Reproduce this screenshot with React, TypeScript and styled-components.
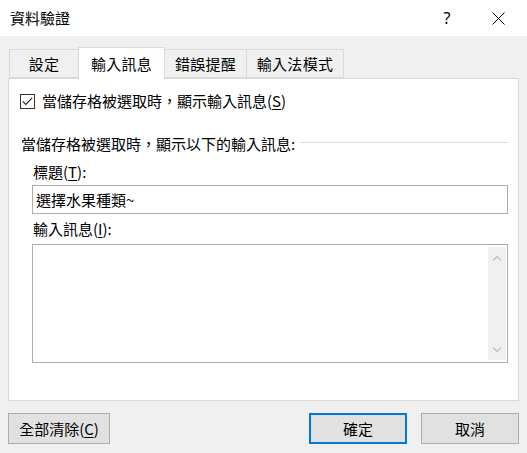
import styled, { createGlobalStyle } from "styled-components";

const GlobalStyle = createGlobalStyle`
    html, body {
        margin: 0;
        padding: 0;
        background: #f0f0f0;
    }

    body {
        font-family: "Noto Sans CJK TC", "Noto Sans", sans-serif;
        font-size: 15px;
        color: #000;
    }
`;

const Dialog = styled.div`
    width: 527px;
    height: 453px;
    background: #f0f0f0;
    display: flex;
    flex-direction: column;
    overflow: hidden;
`;

const TitleBar = styled.div`
    height: 36px;
    background: #fff;
    display: flex;
    align-items: center;
    padding-left: 10px;
    box-sizing: border-box;
`;

const Title = styled.div`
    flex: 1;
    line-height: 20px;
`;

const TitleButton = styled.div<{ $width: number }>`
    width: ${(p) => p.$width}px;
    height: 36px;
    display: flex;
    align-items: center;
    justify-content: center;
    font-family: "Noto Sans", sans-serif;
    font-size: 16px;
`;

const Body = styled.div`
    padding: 11px 8px 0 8px;
    display: flex;
    flex-direction: column;
`;

const TabRow = styled.div`
    display: flex;
    align-items: flex-end;
    padding-left: 1px;
    height: 32px;
    margin-bottom: -1px;
    position: relative;
    z-index: 1;
`;

const Tab = styled.div<{ $width: number; $active?: boolean }>`
    width: ${(p) => p.$width}px;
    height: ${(p) => (p.$active ? 32 : 29)}px;
    margin-bottom: ${(p) => (p.$active ? 0 : 1)}px;
    margin-left: -1px;
    box-sizing: border-box;
    border: 1px solid #d9d9d9;
    border-bottom: ${(p) => (p.$active ? "none" : "1px solid #d9d9d9")};
    background: ${(p) => (p.$active ? "#fff" : "#f0f0f0")};
    display: flex;
    align-items: center;
    justify-content: center;
    padding-top: ${(p) => (p.$active ? 0 : 1)}px;
    line-height: 20px;
    letter-spacing: 0.3px;

    &:first-child {
        margin-left: 0;
    }
`;

const Panel = styled.div`
    height: 323px;
    box-sizing: border-box;
    background: #fff;
    border: 1px solid #d9d9d9;
    padding: 0 10px 0 11px;
    display: flex;
    flex-direction: column;
`;

const CheckRow = styled.div`
    margin-top: 12px;
    height: 20px;
    display: flex;
    align-items: center;
    gap: 7px;
    line-height: 20px;
`;

const CheckBox = styled.div`
    width: 15px;
    height: 15px;
    box-sizing: border-box;
    border: 1px solid #333;
    background: #fff;
    display: flex;
    align-items: center;
    justify-content: center;
`;

const SectionRow = styled.div`
    margin-top: 23px;
    height: 20px;
    display: flex;
    align-items: center;
    padding-left: 1px;
    line-height: 20px;
`;

const SectionLine = styled.div`
    flex: 1;
    height: 1px;
    background: #dcdcdc;
    margin-left: 5px;
    margin-top: -3px;
`;

const Indent = styled.div`
    padding-left: 12px;
    display: flex;
    flex-direction: column;
`;

const FieldLabel = styled.div<{ $top: number }>`
    margin-top: ${(p) => p.$top}px;
    height: 20px;
    line-height: 20px;
    padding-left: 1px;
`;

const TextInput = styled.input`
    margin-top: 3px;
    height: 29px;
    width: 100%;
    box-sizing: border-box;
    border: 1px solid #adadad;
    padding: 0 3px;
    font-family: inherit;
    font-size: 15px;
    color: #000;
    outline: none;
    background: #fff;
`;

const MessageBox = styled.div`
    margin-top: 5px;
    height: 119px;
    box-sizing: border-box;
    border: 1px solid #adadad;
    background: #fff;
    padding: 2px 1px 2px 0;
    display: flex;
    justify-content: flex-end;
`;

const ScrollTrack = styled.div`
    width: 18px;
    background: #f0f0f0;
    display: flex;
    flex-direction: column;
    justify-content: space-between;
    align-items: center;
    padding: 8px 0 7px;
    box-sizing: border-box;
`;

const ButtonRow = styled.div`
    margin-top: 12px;
    display: flex;
    align-items: center;
`;

const Button = styled.div<{ $width: number; $primary?: boolean }>`
    width: ${(p) => p.$width}px;
    height: 31px;
    box-sizing: border-box;
    background: #e1e1e1;
    border: ${(p) => (p.$primary ? "2px solid #0078d7" : "1px solid #adadad")};
    display: flex;
    align-items: center;
    justify-content: center;
    line-height: 20px;
`;

const Spacer = styled.div`
    flex: 1;
`;

const Gap = styled.div`
    width: 14px;
`;

const Key = styled.span`
    text-decoration: underline;
    text-underline-offset: 2px;
`;

const Chevron = ({ up }: { up?: boolean }) => (
    <svg width="10" height="6" viewBox="0 0 10 6">
        <path
            d={up ? "M1 5.5 L5 1.5 L9 5.5" : "M1 0.5 L5 4.5 L9 0.5"}
            fill="none"
            stroke="#c2c2c2"
            strokeWidth="1.3"
        />
    </svg>
);

const App = () => {
    return (
        <>
            <GlobalStyle />
            <Dialog>
                <TitleBar>
                    <Title>資料驗證</Title>
                    <TitleButton $width={56}>?</TitleButton>
                    <TitleButton $width={46}>
                        <svg width="13" height="13" viewBox="0 0 13 13">
                            <path d="M0.5 0.5 L12.5 12.5 M12.5 0.5 L0.5 12.5" stroke="#000" strokeWidth="1" />
                        </svg>
                    </TitleButton>
                    <div style={{ width: 6 }} />
                </TitleBar>

                <Body>
                    <TabRow>
                        <Tab $width={70}>設定</Tab>
                        <Tab $width={87} $active>輸入訊息</Tab>
                        <Tab $width={83}>錯誤提醒</Tab>
                        <Tab $width={98}>輸入法模式</Tab>
                    </TabRow>

                    <Panel>
                        <CheckRow>
                            <CheckBox>
                                <svg width="11" height="9" viewBox="0 0 11 9">
                                    <path d="M0.8 4.3 L3.8 7.5 L10.2 0.8" fill="none" stroke="#222" strokeWidth="1.1" />
                                </svg>
                            </CheckBox>
                            <span>
                                當儲存格被選取時，顯示輸入訊息(<Key>S</Key>)
                            </span>
                        </CheckRow>

                        <SectionRow>
                            <span>當儲存格被選取時，顯示以下的輸入訊息:</span>
                            <SectionLine />
                        </SectionRow>

                        <Indent>
                            <FieldLabel $top={8}>
                                標題(<Key>T</Key>):
                            </FieldLabel>
                            <TextInput value="選擇水果種類~" readOnly />
                            <FieldLabel $top={5}>
                                輸入訊息(<Key>I</Key>):
                            </FieldLabel>
                            <MessageBox>
                                <ScrollTrack>
                                    <Chevron up />
                                    <Chevron />
                                </ScrollTrack>
                            </MessageBox>
                        </Indent>
                    </Panel>

                    <ButtonRow>
                        <Button $width={102}>
                            全部清除(<Key>C</Key>)
                        </Button>
                        <Spacer />
                        <Button $width={98} $primary>確定</Button>
                        <Gap />
                        <Button $width={98}>取消</Button>
                    </ButtonRow>
                </Body>
            </Dialog>
        </>
    );
};

export default App;
